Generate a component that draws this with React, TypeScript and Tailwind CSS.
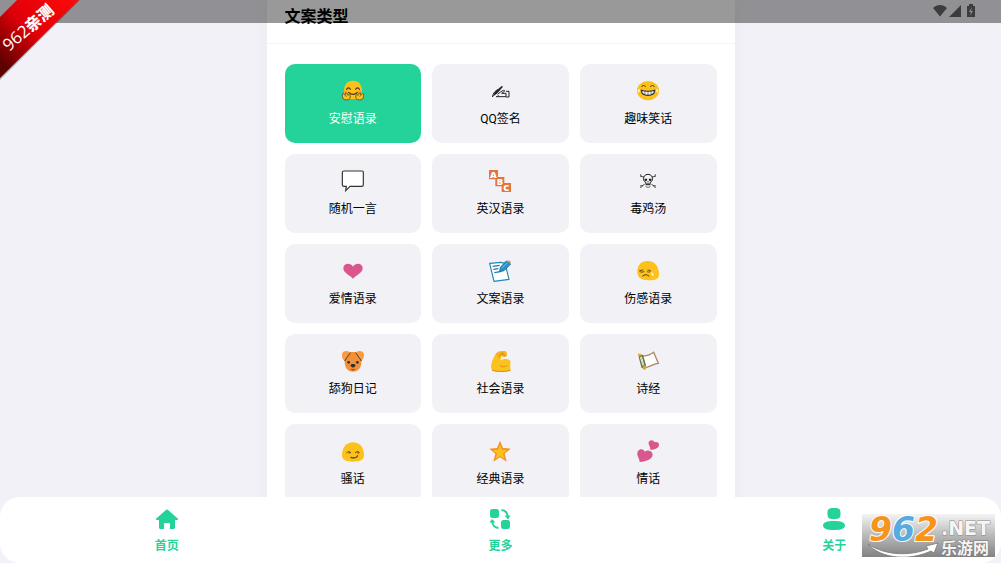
import React, { useState } from "react";
import { clsx } from "clsx";

interface IconProps {
  children: React.ReactNode;
}

// All category drawings share a 66 unit canvas
const Glyph: React.FC<IconProps> = ({ children }) => (
  <svg viewBox="0 0 66 66" className="size-[22px] overflow-visible" fill="none" aria-hidden="true">
    {children}
  </svg>
);

const HugIcon = () => (
  <Glyph>
    <path d="M33 2C16 2 6 14 6 32c0 18 8 25 27 25s27-7 27-25C60 14 50 2 33 2Z" fill="#FCC21B" />
    <circle cx="12" cy="36" r="6" fill="#F9A72B" />
    <circle cx="54" cy="36" r="6" fill="#F9A72B" />
    <path d="M14 28c2-6 9-6 11 0M41 28c2-6 9-6 11 0" stroke="#4A3420" strokeWidth="3.5" strokeLinecap="round" />
    <path d="M20 37c7 8 19 8 26 0" stroke="#4A3420" strokeWidth="3.5" strokeLinecap="round" />
    <path d="M1 42c4-3 6 1 8 3l2-7c5 0 4 6 8 5 6 0 7 7 5 12-2 6-17 6-20 2-3-5-3-10-3-15Z" fill="#FCC21B" stroke="#5D4430" strokeWidth="2.5" />
    <path d="M65 42c-4-3-6 1-8 3l-2-7c-5 0-4 6-8 5-6 0-7 7-5 12 2 6 17 6 20 2 3-5 3-10 3-15Z" fill="#FCC21B" stroke="#5D4430" strokeWidth="2.5" />
    <path d="m9 45 4 5m2-7 4 5M57 45l-4 5m-2-7-4 5" stroke="#5D4430" strokeWidth="2" />
  </Glyph>
);

const WritingIcon = () => (
  <Glyph>
    <path d="m11 50 7-15 20-17 4 2-17 20-14 10Z" fill="#222" />
    <path d="M10 51c3-13 10-20 17-22M26 43c5-5 12-10 18-12 4-1 4 3 0 5l-6 4h13v10H22c4-1 6-2 7-4" stroke="#222" strokeWidth="3" />
    <path d="M51 34h9v17h-9" stroke="#222" strokeWidth="3" />
  </Glyph>
);

const LaughIcon = () => (
  <Glyph>
    <ellipse cx="33" cy="32" rx="33" ry="29" fill="#FCC21B" />
    <path d="M14 20c3-5 9-5 12 0M40 20c3-5 9-5 12 0" stroke="#3E3225" strokeWidth="3" strokeLinecap="round" />
    <path d="M13 31c10 3 30 3 40 0 0 10-7 15-20 15s-20-5-20-15Z" fill="#fff" stroke="#2F2F2F" strokeWidth="3.5" />
    <path d="M24 33v11m9-11v12m9-12v11" stroke="#2F2F2F" strokeWidth="2" />
    <path d="M9 26c-6 2-9 7-6 10 4 3 7-2 6-10ZM57 26c6 2 9 7 6 10-4 3-7-2-6-10Z" fill="#FFF4CF" />
  </Glyph>
);

const SpeechIcon = () => (
  <Glyph>
    <path d="M6 3h54q4 0 4 4v37q0 5-5 5H24L11 62l2-13H6q-5 0-5-5V8q0-5 5-5Z" fill="#fff" stroke="#333" strokeWidth="3.5" />
  </Glyph>
);

const AbcIcon = () => (
  <Glyph>
    <path d="M0 0h27v28H0zM19 21h27v28H19zM38 39h28v27H38z" fill="#E5733D" />
    <g fill="#fff" fontFamily="Open Sans, sans-serif" fontWeight="800" fontSize="28" textAnchor="middle">
      <text x="13" y="24">A</text>
      <text x="33" y="45">B</text>
      <text x="52" y="63">C</text>
    </g>
  </Glyph>
);

const SkullIcon = () => (
  <Glyph>
    <path d="M11 13c0 7 4 7 10 8m34-8c0 7-4 7-10 8M11 54c0-6 5-7 12-11m32 11c0-6-5-7-12-11M9 18l7 2m41-2-7 2M10 47l8 1m38-1-8 1" stroke="#444" strokeWidth="3" />
    <path d="M33 13c-9 0-14 6-13 14 0 6 2 8 6 9l1 8h12l1-8c4-1 6-3 6-9 1-8-4-14-13-14Z" fill="#F5F5F7" stroke="#222" strokeWidth="3" />
    <path d="M23 26h8l-2 7h-6zM43 26h-8l2 7h6zM33 32l-3 5h6z" fill="#222" />
    <path d="M30 39v6m3-6v6m3-6v6M25 48c4 5 12 5 16 0" stroke="#222" strokeWidth="2" />
  </Glyph>
);

const HeartIcon = () => (
  <Glyph>
    <path d="M33 56C25 47 4 39 4 25 4 9 25 7 33 20 41 7 62 9 62 25c0 14-21 22-29 31Z" fill="#D9578D" />
  </Glyph>
);

const NoteIcon = () => (
  <Glyph>
    <path d="m2 10 34-3 12 3 12 48-45 6L2 10Z" fill="#fff" stroke="#1E88B8" strokeWidth="3.5" strokeLinejoin="round" />
    <path d="m11 19 21-3M13 28l15-2M16 38l18-3" stroke="#1878A8" strokeWidth="3.5" />
    <path d="m34 22 18-19 13 9-20 20-13 3 2-13Z" fill="#2B93C8" stroke="#1B6083" strokeWidth="2.5" />
    <path d="m54 3 10 8 2-5-6-5-6 2Z" fill="#C9A08A" />
    <path d="m38 24 17-16" stroke="#69C0E7" strokeWidth="3" />
  </Glyph>
);

const SadIcon = () => (
  <Glyph>
    <path d="M32 3C12 3 2 15 1 34c-1 19 12 27 33 27 22 0 32-5 32-17C66 20 54 3 32 3Z" fill="#FCC21B" />
    <path d="M9 35c4 2 8 2 12 0M31 35c3 2 6 2 9-1M8 32l10-2M33 30l7 2" stroke="#4A3A1C" strokeWidth="2.5" strokeLinecap="round" />
    <path d="M17 48c5-5 13-5 19 0" stroke="#4A3A1C" strokeWidth="3" strokeLinecap="round" />
    <path d="M44 36c7 4 7 10 3 12-4-1-4-5-3-12Z" fill="#FFF7DD" />
  </Glyph>
);

const DogIcon = () => (
  <Glyph>
    <path d="M15 10C21 5 45 5 51 10c7 7 8 16 7 27-1 17-8 28-25 28S9 54 8 37C7 26 8 17 15 10Z" fill="#F28F38" />
    <path d="M24 8C18 1 4 2 1 10c-3 9 1 19 7 23 6-4 9-13 16-25Z" fill="#F79C42" />
    <path d="M42 8c6-7 20-6 23 2 3 9-1 19-7 23-6-4-9-13-16-25Z" fill="#F79C42" />
    <path d="M25 8 15 22 8 33M41 8l10 14 7 11" stroke="#563A25" strokeWidth="3" />
    <circle cx="20" cy="37" r="4" fill="#2F2F2F" />
    <circle cx="46" cy="37" r="4" fill="#2F2F2F" />
    <path d="M26 46c0-5 14-5 14 0 0 4-4 6-7 7-3-1-7-3-7-7Z" fill="#2F2F2F" />
    <path d="M28 58c3 2 7 2 10 0" stroke="#2F2F2F" strokeWidth="2.5" />
  </Glyph>
);

const ArmIcon = () => (
  <Glyph>
    <path d="M20 12C26 3 42 1 52 5l2 13-8 3-8-3-4 14c8-6 20-7 30 0v31c-18 4-43 5-54-2C1 51 10 28 20 12Z" fill="#FCC21B" />
    <path d="M20 12c6-9 22-11 32-7l2 13-8 3-8-3-8 5-10-11Z" fill="#F6B41C" />
    <path d="m29 21 9-12 3 6M41 8l6 9M34 47c6 5 14 5 20 0M10 61c13 5 38 5 53 0" stroke="#D99113" strokeWidth="3" strokeLinecap="round" />
  </Glyph>
);

const ScrollIcon = () => (
  <Glyph>
    <path d="M8 16c18 4 31 0 42-9l14 33c-12 0-24 10-43 14L8 16Z" fill="#fff" stroke="#AE8468" strokeWidth="4" />
    <path d="m7 19 9 34M16 16l9 32M7 19l9-3M16 53l9-5" stroke="#667943" strokeWidth="5" />
    <path d="m10 22 8 24" stroke="#EDF0DF" strokeWidth="3" />
    <path d="M3 11h9v7H3zM17 50l9-3 2 7-5 7-5-4-1-7Z" fill="#E2AB20" />
  </Glyph>
);

const SmirkIcon = () => (
  <Glyph>
    <path d="M33 7C13 7 0 23 0 46c0 15 13 19 33 19s33-4 33-19C66 23 53 7 33 7Z" fill="#FCC21B" />
    <path d="M14 38c3-4 9-4 12 0l-5 1m19-1c3-4 9-4 12 0l-5 1" stroke="#55431E" strokeWidth="3" strokeLinecap="round" />
    <path d="M27 52c8 3 17 1 20-5" stroke="#55431E" strokeWidth="3.5" strokeLinecap="round" />
  </Glyph>
);

const StarIcon = () => (
  <Glyph>
    <path d="m33 2 9 22 23 2-18 15 6 24-20-13-20 13 6-24L1 26l23-2 9-22Z" fill="#F28F2C" />
    <path d="m33 13 6 16 16 1-13 11 5 17-14-10-14 10 5-17-13-11 16-1 6-16Z" fill="#FCC21B" />
  </Glyph>
);

const HeartsIcon = () => (
  <Glyph>
    <path d="M8 66C8 54-4 45 3 33c6-8 17-6 20 2 7-6 20-4 23 5 5 14-13 25-38 26Z" fill="#D9578D" />
    <path d="M40 29C41 20 33 14 35 7c3-8 14-8 18 0 6-3 13 1 13 7 0 10-12 15-26 15Z" fill="#D9578D" />
  </Glyph>
);

const categories = [
  { name: "安慰语录", icon: HugIcon },
  { name: "QQ签名", icon: WritingIcon },
  { name: "趣味笑话", icon: LaughIcon },
  { name: "随机一言", icon: SpeechIcon },
  { name: "英汉语录", icon: AbcIcon },
  { name: "毒鸡汤", icon: SkullIcon },
  { name: "爱情语录", icon: HeartIcon },
  { name: "文案语录", icon: NoteIcon },
  { name: "伤感语录", icon: SadIcon },
  { name: "舔狗日记", icon: DogIcon },
  { name: "社会语录", icon: ArmIcon },
  { name: "诗经", icon: ScrollIcon },
  { name: "骚话", icon: SmirkIcon },
  { name: "经典语录", icon: StarIcon },
  { name: "情话", icon: HeartsIcon },
];

const HomeIcon = () => (
  <svg viewBox="0 0 24 24" className="size-6" fill="currentColor" aria-hidden="true">
    <path d="M10.6 3.2a2 2 0 0 1 2.8 0l9.3 8.2c.8.7.3 1.6-.6 1.6H20v7.5c0 .9-.6 1.5-1.5 1.5H15v-4.5c0-1-.6-1.5-1.5-1.5h-3c-.9 0-1.5.5-1.5 1.5V22H5.5C4.6 22 4 21.4 4 20.500V13H1.900c-.9 0-1.400-.9-.6-1.600l9.300-8.200Z" />
  </svg>
);

const MoreIcon = () => (
  <svg viewBox="0 0 24 24" className="size-6" fill="currentColor" aria-hidden="true">
    <rect x="2" y="2" width="9" height="9" rx="2.5" />
    <rect x="13" y="13" width="9" height="9" rx="2.5" />
    <path d="M13.5 3c4 .5 6 3 6.300 6.500M10.500 21c-4-.5-6-3-6.300-6.500" fill="none" stroke="currentColor" strokeWidth="2" />
    <path d="M16.500 8.500h6l-2.500 4zM7.500 15.500h-6L4 12z" />
  </svg>
);

const AboutIcon = () => (
  <svg viewBox="0 0 24 24" className="size-6" fill="currentColor" aria-hidden="true">
    <path d="M12 1c5.500 0 6.500 1 6.500 5.500S17.500 12 12 12s-6.500-1-6.500-5.500S6.500 1 12 1ZM12 14c7 0 11 1.400 11 4.500S19 23 12 23 1 21.600 1 18.500 5 14 12 14Z" />
  </svg>
);

const tabs = [
  { label: "首页", icon: HomeIcon },
  { label: "更多", icon: MoreIcon },
  { label: "关于", icon: AboutIcon },
];

const StatusBar = () => (
  <div className="absolute inset-x-0 top-0 z-10 flex h-[23px] justify-end bg-black/40 pr-6 text-[#3c3c3d]">
    <svg viewBox="0 0 44 22" className="h-[22px] w-11" fill="currentColor" aria-hidden="true">
      <path d="M0 8c4-4 10-4 14 0l-7 8.500L0 8ZM28 5v12H16L28 5ZM34 6h2V4h4v2h2v11h-8V6Z" />
      <path d="m39 7-3 5h2l-1 4 3-5h-2z" fill="#929295" />
    </svg>
  </div>
);

const CornerRibbon = () => (
  <svg viewBox="0 0 80 80" className="absolute top-0 left-0 z-20 size-20" role="img" aria-label="962亲测">
    <defs>
      <linearGradient id="ribbon" x1="0" y1="1" x2="1" y2="0">
        <stop offset="0.1" stopColor="#5c0000" />
        <stop offset="0.5" stopColor="#e00008" />
        <stop offset="1" stopColor="#ff0a0a" />
      </linearGradient>
    </defs>
    <path d="M19 0h61L0 80V19Z" fill="#000" opacity="0.25" />
    <path d="M17 0h62L0 78V17Z" fill="url(#ribbon)" />
    <g transform="translate(9 52) rotate(-41)" fill="#fff">
      <text fontSize="17" fontFamily="Open Sans, sans-serif">962</text>
      <text x="29" fontSize="16" fontWeight="900" fontFamily="Noto Sans CJK SC, sans-serif">亲测</text>
    </g>
  </svg>
);

const SiteLogo = () => (
  <svg viewBox="0 0 133 43" className="absolute right-[6px] bottom-[6px] h-[43px] w-[133px]" role="img" aria-label="962.NET 乐游网">
    <defs>
      <linearGradient id="plate" x1="0" y1="0" x2="0" y2="1">
        <stop offset="0" stopColor="#f4f4f4" />
        <stop offset="0.5" stopColor="#b9b9b9" />
        <stop offset="1" stopColor="#828282" />
      </linearGradient>
    </defs>
    <path d="M0 0h133v43H0z" fill="url(#plate)" />
    <path d="M6 30c18 12 42 12 60 5l-2-3 12-3-4 10-3-2C48 47 19 45 6 30Z" fill="#fff" stroke="#777" strokeWidth="0.8" />
    <g fontFamily="DejaVu Sans, sans-serif" fontWeight="bold" stroke="#fff" strokeLinejoin="round" paintOrder="stroke">
      <text x="7" y="27" fontSize="33" fontStyle="italic" strokeWidth="2" fill="#F7941D">
        9<tspan fill="#58ABE0">6</tspan>2
      </text>
      <text x="79" y="21" fontSize="19" fill="#f5f5f5" stroke="#888" strokeWidth="1">.NET</text>
    </g>
    <text x="79" y="40" fontSize="16" fontWeight="bold" fontFamily="Noto Sans CJK SC, sans-serif" fill="#f5f5f5" stroke="#777" strokeWidth="1" paintOrder="stroke">乐游网</text>
  </svg>
);

export default function App() {
  const [selected, setSelected] = useState("安慰语录");

  return (
    <div className="relative flex h-screen flex-col overflow-hidden bg-[#f2f1f7] font-['Roboto','Noto_Sans_CJK_SC',sans-serif] text-black">
      <StatusBar />
      <CornerRibbon />

      {/* Category panel */}
      <main className="min-h-0 flex-1 overflow-hidden">
        <section className="mx-auto w-full max-w-[468px] bg-white pb-5 shadow-[0_0_16px_rgba(0,0,0,0.04)]">
          <h1 className="border-b border-gray-100 px-[18px] pt-[5px] pb-[14px] text-base leading-6 font-bold">文案类型</h1>
          <div className="grid grid-cols-3 gap-[11px] px-[18px] pt-5">
            {categories.map(({ name, icon: Icon }) => (
              <button
                key={name}
                type="button"
                aria-pressed={selected === name}
                onClick={() => setSelected(name)}
                className={clsx(
                  "flex h-[79px] flex-col items-center rounded-[10px] pt-4",
                  selected === name ? "bg-[#24d39a] text-white" : "bg-[#f2f1f6] text-black"
                )}
              >
                <Icon />
                <span className="mt-2 text-xs leading-[18px]">{name}</span>
              </button>
            ))}
          </div>
        </section>
      </main>

      {/* Bottom tabs */}
      <nav className="relative grid h-[66px] grid-cols-3 rounded-[20px] bg-white text-[#24d39a]">
        {tabs.map(({ label, icon: Icon }) => (
          <a key={label} href="#" className="flex flex-col items-center pt-[10px]">
            <Icon />
            <span className="mt-[6px] text-xs leading-[18px] font-bold">{label}</span>
          </a>
        ))}
        <SiteLogo />
      </nav>
    </div>
  );
}
